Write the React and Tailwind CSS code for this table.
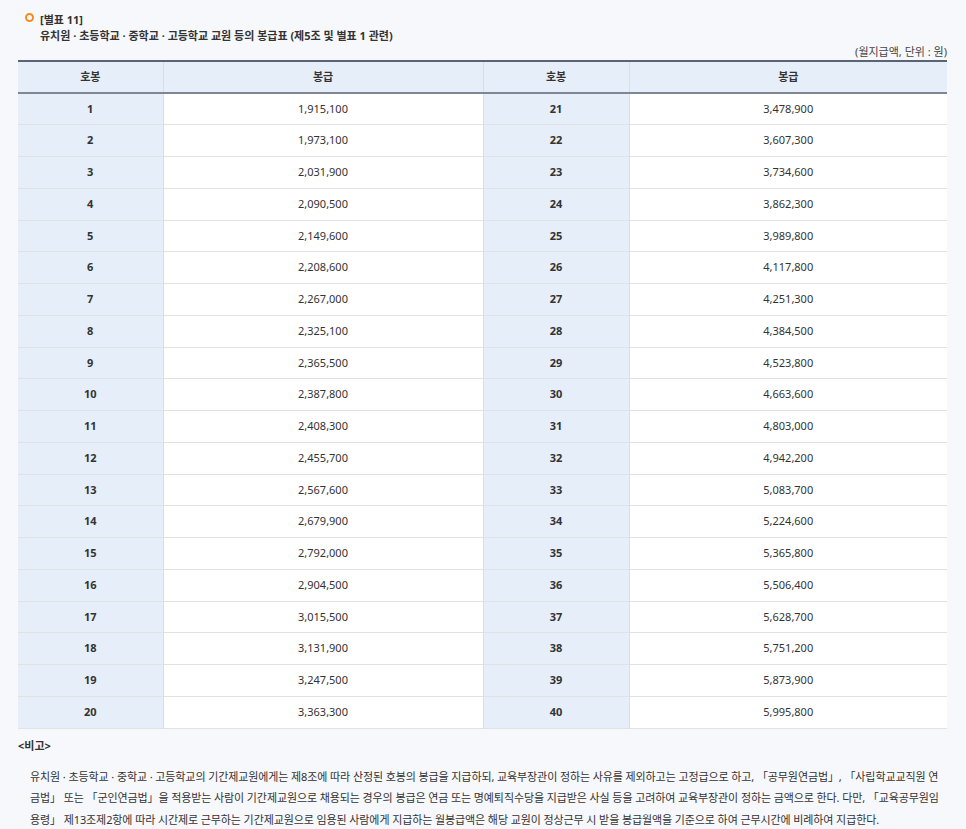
const rows = [
  ['1', '1,915,100', '21', '3,478,900'],
  ['2', '1,973,100', '22', '3,607,300'],
  ['3', '2,031,900', '23', '3,734,600'],
  ['4', '2,090,500', '24', '3,862,300'],
  ['5', '2,149,600', '25', '3,989,800'],
  ['6', '2,208,600', '26', '4,117,800'],
  ['7', '2,267,000', '27', '4,251,300'],
  ['8', '2,325,100', '28', '4,384,500'],
  ['9', '2,365,500', '29', '4,523,800'],
  ['10', '2,387,800', '30', '4,663,600'],
  ['11', '2,408,300', '31', '4,803,000'],
  ['12', '2,455,700', '32', '4,942,200'],
  ['13', '2,567,600', '33', '5,083,700'],
  ['14', '2,679,900', '34', '5,224,600'],
  ['15', '2,792,000', '35', '5,365,800'],
  ['16', '2,904,500', '36', '5,506,400'],
  ['17', '3,015,500', '37', '5,628,700'],
  ['18', '3,131,900', '38', '5,751,200'],
  ['19', '3,247,500', '39', '5,873,900'],
  ['20', '3,363,300', '40', '5,995,800'],
];

export default function App() {
  return (
    <main
      className="min-h-screen bg-[#f7f8fb] text-[#333] pt-[12px] pl-[18px] pr-[19px]"
      style={{ fontFamily: '"Noto Sans", "Noto Sans CJK KR", sans-serif' }}
    >
      {/* title */}
      <div className="flex items-start gap-[6px] pl-[7px]">
        <span className="mt-[1px] h-[9px] w-[9px] shrink-0 rounded-full border-[2.5px] border-[#f58b1f]" />
        <div className="text-[11px] font-bold leading-[16px] text-[#333]">
          <p>[별표 11]</p>
          <p>유치원 · 초등학교 · 중학교 · 고등학교 교원 등의 봉급표 (제5조 및 별표 1 관련)</p>
        </div>
      </div>
      <p className="text-right text-[11px] leading-[16px] text-[#444]">(월지급액, 단위 : 원)</p>

      {/* table */}
      <table className="w-full border-collapse border-t-2 border-[#5b6477] text-[11px] text-[#333]">
        <colgroup>
          <col className="w-[145px]" />
          <col className="w-[320px]" />
          <col className="w-[146px]" />
          <col />
        </colgroup>
        <thead>
          <tr className="h-[32px] bg-[#e6eefa] border-b-2 border-[#7f8796]">
            <th className="font-bold border-r border-[#d9dde4]">호봉</th>
            <th className="font-bold border-r border-[#d9dde4]">봉급</th>
            <th className="font-bold border-r border-[#d9dde4]">호봉</th>
            <th className="font-bold">봉급</th>
          </tr>
        </thead>
        <tbody>
          {rows.map((r) => (
            <tr key={r[0]} className="h-[31.75px] border-b border-[#e2e2e2]">
              <td className="bg-[#e6eefa] text-center font-bold border-r border-[#d9dde4]">{r[0]}</td>
              <td className="bg-white text-center border-r border-[#d9dde4]">{r[1]}</td>
              <td className="bg-[#e6eefa] text-center font-bold border-r border-[#d9dde4]">{r[2]}</td>
              <td className="bg-white text-center">{r[3]}</td>
            </tr>
          ))}
        </tbody>
      </table>

      {/* notes */}
      <p className="mt-[9px] text-[11px] font-bold leading-[16px] text-[#333]">&lt;비고&gt;</p>
      <p className="mt-[12px] pl-[12px] text-[11px] leading-[21.5px] tracking-[-0.1px] text-[#333]">
        유치원 · 초등학교 · 중학교 · 고등학교의 기간제교원에게는 제8조에 따라 산정된 호봉의 봉급을 지급하되, 교육부장관이 정하는 사유를 제외하고는 고정급으로 하고, 「공무원연금법」, 「사립학교교직원 연금법」 또는 「군인연금법」을 적용받는 사람이 기간제교원으로 채용되는 경우의 봉급은 연금 또는 명예퇴직수당을 지급받은 사실 등을 고려하여 교육부장관이 정하는 금액으로 한다. 다만, 「교육공무원임용령」 제13조제2항에 따라 시간제로 근무하는 기간제교원으로 임용된 사람에게 지급하는 월봉급액은 해당 교원이 정상근무 시 받을 봉급월액을 기준으로 하여 근무시간에 비례하여 지급한다.
      </p>
    </main>
  );
}
